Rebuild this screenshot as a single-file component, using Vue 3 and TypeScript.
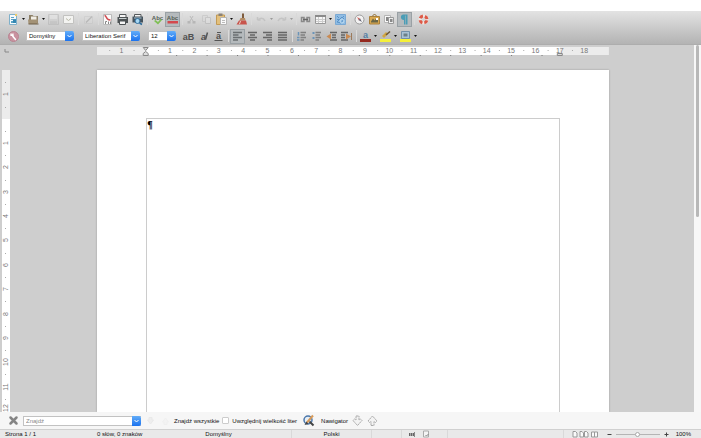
<script setup lang="ts">
import { computed, onBeforeUnmount, onMounted, ref } from 'vue'

interface Tool {
  icon?: string
  label?: string
  menu?: boolean
  pressed?: boolean
  faded?: boolean
  sep?: 'narrow' | 'wide'
}

const mainTools: Tool[] = [
  { icon: 'new', label: 'Nowy', menu: true },
  { icon: 'open', label: 'Otwórz', menu: true },
  { icon: 'save', label: 'Zapisz', faded: true },
  { icon: 'mail', label: 'Wyślij' },
  { sep: 'wide' },
  { icon: 'edit', label: 'Edytuj', faded: true },
  { sep: 'narrow' },
  { icon: 'pdf', label: 'Eksportuj jako PDF' },
  { icon: 'print', label: 'Drukuj' },
  { icon: 'preview', label: 'Podgląd wydruku' },
  { sep: 'wide' },
  { icon: 'spell', label: 'Pisownia' },
  { icon: 'autospell', label: 'Automatyczna pisownia', pressed: true },
  { sep: 'narrow' },
  { icon: 'cut', label: 'Wytnij', faded: true },
  { icon: 'copy', label: 'Kopiuj', faded: true },
  { icon: 'paste', label: 'Wklej', menu: true },
  { icon: 'brush', label: 'Klonuj formatowanie' },
  { sep: 'wide' },
  { icon: 'undo', label: 'Cofnij', menu: true, faded: true },
  { icon: 'redo', label: 'Ponów', menu: true, faded: true },
  { sep: 'narrow' },
  { icon: 'link', label: 'Hiperłącze' },
  { icon: 'table', label: 'Tabela', menu: true },
  { icon: 'draw', label: 'Rysunek' },
  { sep: 'narrow' },
  { icon: 'compass', label: 'Nawigator' },
  { icon: 'gallery', label: 'Galeria' },
  { icon: 'sources', label: 'Źródła danych' },
  { icon: 'pilcrow', label: 'Znaki niedrukowane', pressed: true },
  { sep: 'narrow' },
  { icon: 'help', label: 'Pomoc' },
]

const formatTools: Tool[] = [
  { icon: 'bold', label: 'Pogrubienie' },
  { icon: 'italic', label: 'Kursywa' },
  { icon: 'underline', label: 'Podkreślenie' },
  { sep: 'narrow' },
  { icon: 'left', label: 'Do lewej', pressed: true },
  { icon: 'center', label: 'Do środka' },
  { icon: 'right', label: 'Do prawej' },
  { icon: 'justify', label: 'Wyjustuj' },
  { sep: 'narrow' },
  { icon: 'numbers', label: 'Numerowanie' },
  { icon: 'bullets', label: 'Wypunktowanie' },
  { icon: 'outdent', label: 'Zmniejsz wcięcie' },
  { icon: 'indent', label: 'Zwiększ wcięcie' },
  { sep: 'narrow' },
  { icon: 'fontcolor', label: 'Kolor czcionki', menu: true },
  { icon: 'highlight', label: 'Wyróżnienie', menu: true },
  { icon: 'background', label: 'Kolor tła', menu: true },
]

const icons: Record<string, string> = {
  new: '<path fill="#f5fafc" stroke="#7fb0ca" d="M3.500 2.500h7v10h-7z"/><path fill="#5ba3c6" d="M5 5h3v1H5zM5 7h5v1H5zM5 9h4v2H5z"/><path fill="#3487b2" d="M7 7.500h3V11H7z"/><path fill="#eccb6a" d="M9 2h2v2H9z"/>',
  open: '<path fill="#8c7f66" d="M3 3h3.500l1 1h4.500v7H3z"/><path fill="#f1eee6" d="M5 4.500h5.500V8H5z"/><path fill="#a39276" d="M2 7.500h10L11.500 12H2.500z"/><path fill="#6d5f48" d="M2.500 11.500h10v1h-10z"/>',
  save: '<path fill="#c6c6c6" stroke="#999" d="M2.500 2.500h10v10h-10z"/><path fill="#eee" d="M4 3h7v4H4z"/><path fill="#aaa" d="M4 9h7v3.500H4z"/>',
  mail: '<path fill="#f3f3f1" stroke="#c2c2c0" d="M2.500 3.500h10v8h-10z"/><path fill="none" stroke="#b9b9a8" d="M5 6.500l2.500 2L10 6.500"/>',
  edit: '<path fill="#ddd" stroke="#bbb" d="M3.500 4.500h8v7h-8z"/><path stroke="#777" stroke-width="1.500" d="M5 10.500l6-6"/>',
  pdf: '<path fill="#fbfbfb" stroke="#bbb" d="M3.500 2.500h8v10h-8z"/><path fill="none" stroke="#cf4a4f" stroke-width="1.500" d="M4.500 3.500c1.500 0 2 2.500 3 3.500s2 1 3 1"/><path fill="none" stroke="#888" d="M5.500 12V9.500H7M8.500 12V9.500M10.500 12V9.500"/>',
  print: '<path fill="#f5f5f5" stroke="#55595b" d="M4.500 2.500h6.500v3H4.500z"/><path fill="#4d5254" d="M2.500 5h10.500v6H2.500z"/><path fill="#c9d0d1" d="M4 6h7.500v1H4z"/><path fill="#f5f5f5" stroke="#4d5254" d="M4.500 9h6v3.500h-6z"/>',
  preview: '<path fill="#f5f5f5" stroke="#55595b" d="M4.500 2.500h6.500v3H4.500z"/><path fill="#46535c" d="M2.500 4.500H13v6H2.500z"/><path fill="#a9c4d6" d="M4 5.500h7.500v1H4z"/><circle cx="7.500" cy="9" r="2.500" fill="#a8d7f2" stroke="#2f6d9c"/><path stroke="#2f6d9c" stroke-width="1.600" d="M9.500 11l2.500 1.500"/>',
  spell: '<text x="7.500" y="8" class="abc">Abc</text><path fill="#7fbf56" d="M4 9l1.500-1L8 10l2.500-3L12 8l-4 4.500z"/>',
  autospell: '<text x="7.500" y="8" class="abc">Abc</text><path fill="#d4484d" d="M2.500 9h10.500v2.500H2.500z"/>',
  cut: '<path fill="none" stroke="#777" d="M6 4l3 5M9 4L6 9"/><path fill="#777" d="M3.500 9h3v2.500h-3zM8.500 9h3v2.500h-3z"/>',
  copy: '<path fill="#ddd" stroke="#aaa" d="M3.500 3.500h5v6h-5z"/><path fill="#eee" stroke="#999" d="M6.500 5.500h5v6h-5z"/>',
  paste: '<path fill="#e3c07c" stroke="#c39a54" d="M2.500 3h8v9.500h-8z"/><path fill="#8a8175" d="M4.500 1.500h4v2.500h-4z"/><path fill="#fafafa" stroke="#b5b5b5" d="M6.500 5.500h6v7h-6z"/><path stroke="#bbb" d="M8 8.500h3M8 10.500h3"/>',
  brush: '<path stroke="#7d5b3c" stroke-width="2" d="M9 1.500V6"/><path fill="#b48d65" d="M6.500 6H11l.5 2.500H5.500z"/><path fill="#c8544c" d="M5 8.500h7l1 4H2.500z"/><path stroke="#ead2c5" d="M5.500 12l1-3"/>',
  undo: '<path fill="none" stroke="#999" stroke-width="1.500" d="M3.500 8h3M3.500 8V5M4 8c2-2 5-3 7 1"/>',
  redo: '<path fill="none" stroke="#999" stroke-width="1.500" d="M11.500 8h-3M11.500 8V5M11 8C9 6 6 5 4 9"/>',
  link: '<path fill="none" stroke="#8a8a8a" stroke-width="1.500" d="M3.500 5.500v4H6v-4zM9 5.500v4h2.500v-4z"/><path stroke="#666" stroke-width="1.500" d="M5 7.500h5"/>',
  table: '<path fill="#f7f7f7" stroke="#999" d="M2.500 3.500h10v8h-10z"/><path fill="#8a8a8a" d="M2 3h11v2H2z"/><path stroke="#ccc" d="M3 7.500h9M3 9.500h9M5.500 5v6M9.500 5v6"/>',
  draw: '<path fill="#8fbce3" stroke="#7aa9d4" d="M2.500 2.500h10v10h-10z"/><path fill="none" stroke="#5a93c8" d="M4 10l5-5 2 2-3 4zM4 4l2 2M10 4l1 1M4 7.500h3"/><circle cx="9" cy="9" r="2" fill="none" stroke="#bcdcf3"/>',
  compass: '<circle cx="7.500" cy="7.500" r="4.500" fill="#f2f2f2" stroke="#9a9a9a"/><path fill="#d0605a" d="M5 5l3.500 2-1.500 1.500z"/><path fill="#667" d="M10 10L6.500 8 8 6.500z"/>',
  gallery: '<path fill="#d8a850" stroke="#a9803c" d="M2.500 4.500h10v7.500h-10z"/><path fill="none" stroke="#8c6a2d" d="M5.500 4l2-2 2 2"/><path fill="#6b6747" d="M4 9.500l2-3 1.500 2L9 6.500h2v4H4z"/><path fill="#fff" d="M9 6h2v2H9z"/>',
  sources: '<path fill="#fafafa" stroke="#b5b5b5" d="M2.500 3.500h6v7h-6z"/><path fill="#888" d="M4 5h3v4H4z"/><path fill="#eee" stroke="#999" d="M6.500 5.500h5v6h-5z"/><path fill="#8a8a8a" d="M8 7h2.500v3H8z"/>',
  pilcrow: '<path fill="#4a9db6" d="M6.500 2.500h4v10H9v-9H8.500v9H7V8C3 8 3 2.500 6.500 2.500z"/>',
  help: '<circle cx="7.500" cy="7.500" r="3.500" fill="none" stroke="#f1e6e2" stroke-width="3"/><circle cx="7.500" cy="7.500" r="3.500" fill="none" stroke="#dc5a48" stroke-width="3" stroke-dasharray="3.500 2" stroke-dashoffset="-1"/>',
  bold: '<text x="7.500" y="11" class="letter heavy">aB</text>',
  italic: '<text x="7.500" y="11" class="letter heavy slanted">a</text><path stroke="#555" stroke-width="1.500" d="M9.500 10.500l2-7"/>',
  underline: '<text x="7.500" y="10" class="letter heavy">a</text><path stroke="#555" d="M3.500 11.500h8M6 3.500h4"/>',
  left: '<path stroke="#6a6f72" stroke-width="1.400" d="M3 3.500h9M3 6h5.500M3 8.500h9M3 11h5"/>',
  center: '<path stroke="#666" stroke-width="1.400" d="M3 3.500h9M5 6h5M3 8.500h9M5 11h5"/>',
  right: '<path stroke="#666" stroke-width="1.400" d="M3 3.500h9M6 6h6M3 8.500h9M7 11h5"/>',
  justify: '<path stroke="#666" stroke-width="1.400" d="M3 3.500h9M3 6h9M3 8.500h9M3 11h9"/>',
  numbers: '<path stroke="#808080" stroke-width="1.300" d="M6.500 3.500H12M6.500 6H11M6.500 8.500H12M6.500 11H10"/><path stroke="#6b94b8" stroke-width="1.500" d="M4.500 3v3.500M3 8.500h2.500M3 11h2.500"/>',
  bullets: '<path stroke="#808080" stroke-width="1.300" d="M6.500 3.500H12M6.500 6H11M6.500 8.500H12M6.500 11H10"/><path fill="#6b94b8" d="M3.500 3h2v2h-2zM3.500 8h2v2h-2z"/>',
  outdent: '<path stroke="#666" stroke-width="1.400" d="M6 3.500h7M8 6h4M8 8.500h4M6 11h7"/><path fill="#c98a52" d="M7 4.500v6L2.500 7.500z"/>',
  indent: '<path stroke="#666" stroke-width="1.400" d="M2 3.500h7M2 6h4M2 8.500h4M2 11h7"/><path fill="#c98a52" d="M7 4.500v6l5-3z"/><path stroke="#9a7a5c" d="M12.500 4v7"/>',
  fontcolor: '<text x="7.500" y="9" class="letter heavy blue">a</text><path fill="#942a20" d="M2 10h11v3H2z"/>',
  highlight: '<path fill="#d1a640" d="M4 7l4-4 2 2-4 4z"/><path stroke="#6b5535" stroke-width="1.500" d="M8 6l4-3.500"/><path fill="#f5f03a" d="M2 10h11v3H2z"/>',
  background: '<path fill="#a9c2d6" stroke="#7390a8" d="M3.500 2.500h8v7h-8z"/><path fill="#6c8088" d="M5.500 4.500h4v3h-4z"/><path fill="#f5f03a" d="M2 10h11v3H2z"/>',
}

const marginCm = 2
const pageCm = 21
const cm = 24.35

const pct = (n: number) => `${((n + marginCm) / pageCm) * 100}%`

const hLabels = [-1, ...Array.from({ length: 18 }, (_, i) => i + 1)]
const hDots = Array.from({ length: 80 }, (_, i) => -1.75 + i * 0.25).filter((n) => n < 19 && n % 0.5 === 0 && n % 1 !== 0)
const tabStops = Array.from({ length: 13 }, (_, i) => (i + 1) * 1.25)

const vscale = ref<SVGSVGElement | null>(null)
const vHeight = ref(342)
const vy = (n: number) => Math.round((n + marginCm) * cm)
const vLabels = computed(() => {
  const last = Math.floor(vHeight.value / cm) - marginCm
  return Array.from({ length: last + marginCm }, (_, i) => i + 1 - marginCm)
    .filter((n) => n !== 0)
    .map((n) => ({ n: Math.abs(n), y: Math.min(vy(n), Math.floor(vHeight.value) - 4) }))
})
const vDots = computed(() =>
  Array.from({ length: Math.floor(vHeight.value / cm) }, (_, i) => vy(i + 0.5 - marginCm)),
)

const measure = () => {
  if (vscale.value) vHeight.value = vscale.value.getBoundingClientRect().height
}
onMounted(() => {
  measure()
  window.addEventListener('resize', measure)
})
onBeforeUnmount(() => window.removeEventListener('resize', measure))

const style = ref('Domyślny')
const font = ref('Liberation Serif')
const size = ref('12')
const query = ref('')
const matchCase = ref(false)
const zoom = ref(50)
</script>

<template>
  <div class="app">
    <header class="toolbars">
      <div class="bar" role="toolbar" aria-label="Standardowy">
        <template v-for="(t, i) in mainTools" :key="i">
          <span v-if="t.sep" class="sep" :class="t.sep"></span>
          <template v-else>
            <button class="tool" :class="{ pressed: t.pressed, faded: t.faded }" :aria-label="t.label">
              <svg viewBox="0 0 15 15" v-html="icons[t.icon!]"></svg>
            </button>
            <button v-if="t.menu" class="drop" :class="{ faded: t.faded }" :aria-label="t.label + ' – menu'">
              <svg viewBox="0 0 5 4"><path d="M1 1h3L2.500 3z" fill="#111" /></svg>
            </button>
          </template>
        </template>
      </div>
      <div class="bar" role="toolbar" aria-label="Formatowanie">
        <button class="tool" aria-label="Style">
          <svg viewBox="0 0 15 15">
            <circle cx="7.500" cy="7.500" r="5" fill="#c9929f" stroke="#b98492" />
            <path d="M6 5.500l1 2 2.500 3" stroke="#fff" stroke-width="1.500" stroke-linecap="round" fill="none" />
            <path d="M5 4.500v2h2v-2" stroke="#fff" stroke-width="1.200" fill="none" />
          </svg>
        </button>
        <div class="combos">
          <label class="combo para">
            <select v-model="style" aria-label="Styl akapitu"><option>Domyślny</option></select>
            <span class="knob"><svg viewBox="0 0 9 10"><path d="M2.500 4l2 2 2-2" /></svg></span>
          </label>
          <label class="combo face">
            <select v-model="font" aria-label="Nazwa czcionki"><option>Liberation Serif</option></select>
            <span class="knob"><svg viewBox="0 0 9 10"><path d="M2.500 4l2 2 2-2" /></svg></span>
          </label>
          <label class="combo points">
            <select v-model="size" aria-label="Rozmiar czcionki"><option>12</option></select>
            <span class="knob"><svg viewBox="0 0 9 10"><path d="M2.500 4l2 2 2-2" /></svg></span>
          </label>
        </div>
        <template v-for="(t, i) in formatTools" :key="i">
          <span v-if="t.sep" class="sep" :class="t.sep"></span>
          <template v-else>
            <button class="tool" :class="{ pressed: t.pressed }" :aria-label="t.label">
              <svg viewBox="0 0 15 15" v-html="icons[t.icon!]"></svg>
            </button>
            <button v-if="t.menu" class="drop" :aria-label="t.label + ' – menu'">
              <svg viewBox="0 0 5 4"><path d="M1 1h3L2.500 3z" fill="#111" /></svg>
            </button>
          </template>
        </template>
      </div>
    </header>

    <main class="workspace">
      <div class="side">
        <svg class="corner" viewBox="0 0 10 10"><path d="M5 4v3h4" fill="none" stroke="#888" /></svg>
        <div class="vruler">
          <svg ref="vscale" class="vscale">
            <rect width="100%" height="49" fill="#ececec" />
            <text v-for="l in vLabels" :key="l.y" :transform="`translate(6 ${l.y}) rotate(-90)`">{{ l.n }}</text>
            <rect v-for="y in vDots" :key="'d' + y" x="3" :y="y" width="1" height="1" fill="#aaa" />
          </svg>
        </div>
      </div>

      <div class="canvas">
        <svg class="hruler">
          <rect width="100%" height="8" fill="#fff" />
          <rect :width="pct(0)" height="8" fill="#ececec" />
          <rect :x="pct(17)" :width="pct(0)" height="8" fill="#ececec" />
          <rect v-for="n in hDots" :key="'d' + n" :x="pct(n)" y="3" width="1" height="1" fill="#aaa" />
          <rect v-for="n in tabStops" :key="'t' + n" :x="pct(n)" y="8" width="1" height="1" fill="#777" />
          <text v-for="n in hLabels" :key="n" :x="pct(n)" y="6">{{ Math.abs(n) }}</text>
          <svg :x="pct(0)" class="marker"><path d="M-2.500 .5h5L0 3.500zM-2.500 8.500v-2L0 4.500l2.500 2v2z" /></svg>
          <svg :x="pct(17)" class="marker"><path d="M-2.500 8.500v-2h5v2z" /></svg>
        </svg>
        <article class="page">
          <div class="body">¶</div>
        </article>
      </div>

      <div class="scroll"><div class="thumb"></div></div>
    </main>

    <form class="find" @submit.prevent>
      <button class="tool" type="button" aria-label="Zamknij">
        <svg viewBox="0 0 15 15"><path d="M4.500 4.500l6 6M10.500 4.500l-6 6" stroke="#858585" stroke-width="2.500" stroke-linecap="round" /></svg>
      </button>
      <label class="combo search">
        <input v-model="query" type="text" placeholder="Znajdź" aria-label="Znajdź" />
        <span class="knob"><svg viewBox="0 0 9 10"><path d="M2.500 4l2 2 2-2" /></svg></span>
      </label>
      <div class="pair">
        <button class="tool faded" type="button" aria-label="Znajdź następne">
          <svg viewBox="0 0 15 15"><path d="M6 4.500h3V7h1.500l-3 4-3-4H6z" fill="#ddd" stroke="#ccc" /></svg>
        </button>
        <button class="tool faded" type="button" aria-label="Znajdź poprzednie">
          <svg viewBox="0 0 15 15"><path d="M6 11.500h3V9h1.500l-3-4-3 4H6z" fill="#eee" stroke="#e2e2e2" /></svg>
        </button>
      </div>
      <button class="text" type="button">Znajdź wszystkie</button>
      <label class="check"><input v-model="matchCase" type="checkbox" />Uwzględnij wielkość liter</label>
      <button class="tool replace" type="button" aria-label="Znajdź i zamień">
        <svg viewBox="0 0 15 15">
          <circle cx="7" cy="7" r="4" fill="#e5eef6" stroke="#4a76aa" stroke-width="1.500" />
          <path d="M6 9.500l6-7" stroke="#d69a5a" stroke-width="2" />
          <path d="M8.500 8.500l4 4" stroke="#444" stroke-width="2" />
          <path d="M5.500 8.500l2 2.500-4 1z" fill="#444" />
        </svg>
      </button>
      <span class="nav">Nawigator</span>
      <button class="tool" type="button" aria-label="W dół">
        <svg viewBox="0 0 15 15"><path d="M6 3h3v4l1.500-1 1.500 1.500-4.500 5L3 7.500 4.500 6 6 7z" fill="#f3f3f3" stroke="#aaa" stroke-dasharray="2 .5" /></svg>
      </button>
      <button class="tool" type="button" aria-label="W górę">
        <svg viewBox="0 0 15 15"><path d="M6 12.500h3v-4l1.500 1L12 8 7.500 3 3 8l1.500 1.500 1.500-1z" fill="#f3f3f3" stroke="#aaa" stroke-dasharray="2 .5" /></svg>
      </button>
    </form>

    <footer class="status">
      <span class="cell pageno">Strona 1 / 1</span>
      <span class="cell words">0 słów, 0 znaków</span>
      <span class="cell centered tpl">Domyślny</span>
      <span class="cell centered lang">Polski</span>
      <span class="cell blank"></span>
      <span class="cell marks">
        <svg viewBox="0 0 8 8"><path d="M1 3h1.500v3H1zM3 3h1.500v3H3zM5 3h1v3H5z" fill="#666" /><path d="M6.500 2v5" stroke="#888" /></svg>
        <svg viewBox="0 0 8 8"><path d="M1.500 1h5v6h-5z" fill="#f4f4f4" stroke="#aaa" /><path d="M3.500 5l1 1 2-2" fill="none" stroke="#888" /></svg>
      </span>
      <span class="cell fill"></span>
      <span class="views">
        <svg viewBox="0 0 27 8">
          <g fill="#fafafa" stroke="#999">
            <path d="M1 1.500h2.500L5 3v4H1z" />
            <path d="M8 1.500h2L11.500 3v4H8zM12.500 1.500h2L16 3v4h-3.500z" />
            <path d="M19.500 2h3v5h-3zM22.500 2h3v5h-3z" />
          </g>
        </svg>
      </span>
      <button class="step" aria-label="Pomniejsz"><svg viewBox="0 0 5 5"><path d="M.5 2.500h4" stroke="#444" /></svg></button>
      <input v-model="zoom" class="zoom" type="range" min="0" max="100" aria-label="Powiększenie" />
      <button class="step" aria-label="Powiększ"><svg viewBox="0 0 5 5"><path d="M.5 2.500h4M2.500 .5v4" stroke="#444" /></svg></button>
      <span class="percent">100%</span>
    </footer>
  </div>
</template>

<style>
body {
  background: #fff;
}
.abc {
  fill: #566056;
  font-size: 6px;
  font-weight: bold;
  text-anchor: middle;
}
.letter {
  fill: #505050;
  font-size: 9px;
  text-anchor: middle;
}
.heavy {
  font-weight: bold;
}
.slanted {
  font-style: italic;
}
.blue {
  fill: #5580a5;
}
</style>

<style scoped>
.app {
  box-sizing: border-box;
  display: flex;
  flex-direction: column;
  height: 100vh;
  padding-top: 11px;
  overflow: hidden;
  color: #111;
  font: 6px/8px "Liberation Sans", sans-serif;
}
button,
input,
select {
  margin: 0;
  padding: 0;
  border: 0;
  background: none;
  color: inherit;
  font: inherit;
  outline: none;
  appearance: none;
}
svg {
  display: block;
}
.toolbars {
  display: grid;
  gap: 1px;
  flex: none;
  background: linear-gradient(#e3e3e3, #cbcbcb 50%, #b3b3b3);
  border-bottom: 1px solid #adadad;
}
.bar {
  display: flex;
  align-items: center;
  height: 16px;
  padding-left: 6px;
}
.tool {
  box-sizing: border-box;
  flex: none;
  width: 15px;
  height: 15px;
}
.tool svg {
  width: 15px;
  height: 15px;
}
.pressed {
  background: #b5babd;
  box-shadow: inset 0 0 0 1px #9aa1a5;
}
.faded {
  opacity: 0.3;
}
.drop {
  flex: none;
  width: 5px;
  height: 15px;
}
.drop svg {
  width: 5px;
  height: 4px;
}
.sep {
  flex: none;
  height: 12px;
  background: linear-gradient(#d9d9d9, #d9d9d9) center / 1px 100% no-repeat;
}
.narrow {
  width: 4px;
}
.wide {
  width: 5px;
}
.combos {
  display: flex;
  gap: 8px;
  padding: 0 5px;
}
.combo {
  box-sizing: border-box;
  display: flex;
  height: 10px;
  background: #fff;
  border: 1px solid #c2c2c2;
  border-right: 0;
}
.combo select,
.combo input {
  flex: 1;
  min-width: 0;
  padding-left: 2px;
  line-height: 8px;
}
.knob {
  flex: none;
  width: 9px;
  height: 10px;
  margin: -1px 0;
  border-radius: 0 2px 2px 0;
  background: linear-gradient(#62adf9, #1b72ee);
}
.knob path {
  fill: none;
  stroke: #fff;
}
.para {
  width: 48px;
}
.face {
  width: 58px;
}
.points {
  width: 28px;
}
.workspace {
  display: flex;
  flex: 1;
  min-height: 0;
  background: #cecece;
}
.side {
  display: flex;
  flex-direction: column;
  flex: none;
  width: 12px;
}
.corner {
  flex: none;
  width: 10px;
  height: 10px;
  margin-bottom: 15px;
}
.vruler {
  flex: 1;
  min-height: 0;
  margin: 0 2px;
  overflow: hidden;
  background: #fff;
}
.vscale {
  width: 100%;
  height: 100%;
}
.vscale text,
.hruler text {
  fill: #777;
  font-size: 7px;
  text-anchor: middle;
}
.canvas {
  display: flex;
  flex: 1;
  flex-direction: column;
  align-items: center;
  min-width: 0;
}
.hruler {
  flex: none;
  width: 75%;
  height: 9px;
  margin: 2px 0 14px;
}
.marker {
  overflow: visible;
}
.marker path {
  fill: #ddd;
  stroke: #888;
}
.page {
  box-sizing: border-box;
  display: flex;
  flex: 1;
  width: 75%;
  min-height: 0;
  padding: 48px 49px 0;
  background: #fff;
  box-shadow: 0 0 2px #999;
  clip-path: inset(-3px -3px 0);
}
.body {
  flex: 1;
  border: 1px solid #ccc;
  border-bottom: 0;
  color: #000;
  font: bold 10px/11px "Liberation Serif", serif;
}
.scroll {
  box-sizing: border-box;
  flex: none;
  width: 7px;
  padding: 0 2px;
  background: #f7f7f7;
}
.thumb {
  height: 47%;
  border-radius: 2px;
  background: #b8b8b8;
}
.find {
  display: flex;
  align-items: center;
  flex: none;
  height: 17px;
  padding-left: 6px;
  background: #f6f6f6;
}
.search {
  width: 118px;
  margin: 0 2px;
}
.search input::placeholder {
  color: #888;
  opacity: 1;
}
.pair {
  display: flex;
  margin-right: 1px;
}
.text {
  white-space: nowrap;
}
.check {
  display: flex;
  align-items: center;
  gap: 3px;
  margin-left: 3px;
  white-space: nowrap;
}
.check input {
  box-sizing: border-box;
  width: 7px;
  height: 7px;
  border: 1px solid #ccc;
  border-radius: 1px;
  background: #fff;
}
.check input:checked {
  background: #1b72ee;
}
.replace {
  margin: 0 5px 0 4px;
}
.nav {
  margin-right: 2px;
}
.status {
  box-sizing: border-box;
  display: flex;
  align-items: center;
  flex: none;
  height: 9px;
  padding: 0 10px 0 5px;
  background: #e9e9e9;
  border-top: 1px solid #d0d0d0;
  white-space: nowrap;
}
.cell {
  box-sizing: border-box;
  height: 8px;
  border-right: 1px solid #d9d9d9;
}
.centered {
  text-align: center;
}
.pageno,
.words {
  border: 0;
}
.pageno {
  width: 92px;
}
.words {
  width: 49px;
}
.tpl {
  width: 146px;
}
.lang {
  width: 80px;
}
.blank {
  width: 30px;
}
.marks {
  display: flex;
  gap: 6px;
  width: 46px;
  padding-left: 6px;
}
.marks svg {
  width: 8px;
  height: 8px;
}
.fill {
  flex: 1;
}
.views {
  margin: 0 8px;
}
.views svg {
  width: 27px;
  height: 8px;
}
.step {
  width: 5px;
  height: 5px;
}
.zoom {
  width: 44px;
  height: 7px;
  margin: 0 4px;
  background: linear-gradient(#b5b5b5, #b5b5b5) center / 100% 1px no-repeat;
}
.zoom::-webkit-slider-thumb {
  box-sizing: border-box;
  width: 5px;
  height: 5px;
  border: 1px solid #aaa;
  border-radius: 50%;
  background: #fff;
  appearance: none;
}
.percent {
  margin-left: 7px;
}
</style>
